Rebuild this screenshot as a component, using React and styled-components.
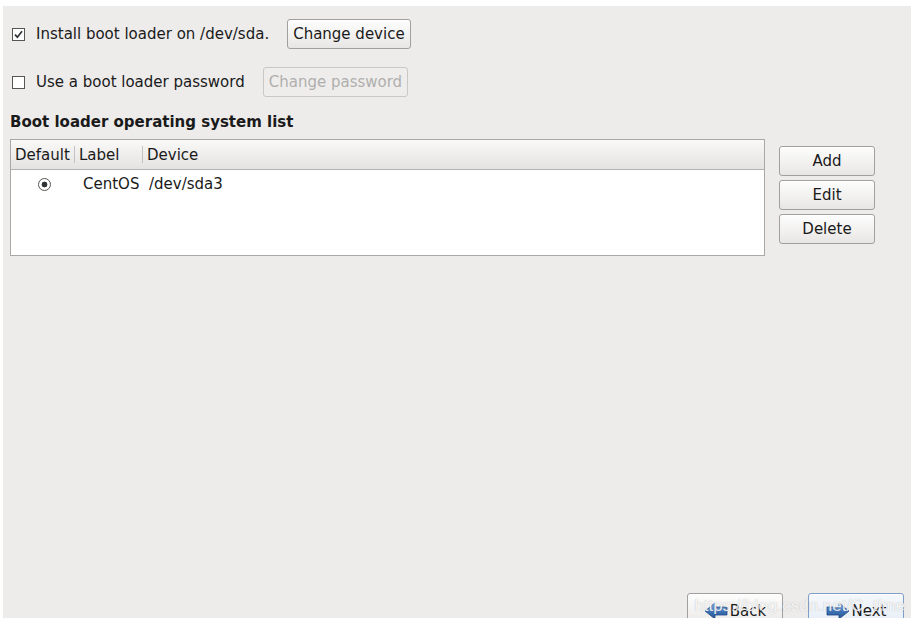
import React from 'react'
import styled, { createGlobalStyle, css } from 'styled-components'

const GlobalStyle = createGlobalStyle`
  html, body {
    margin: 0;
    padding: 0;
    background: #ffffff;
    overflow: hidden;
  }
  body {
    font-family: "DejaVu Sans", "Liberation Sans", sans-serif;
    font-size: 15px;
    color: #1a1a1a;
  }
`

const entries = [{ label: 'CentOS', device: '/dev/sda3', isDefault: true }]

function CheckMark() {
  return (
    <svg width="9" height="9" viewBox="0 0 9 9">
      <path d="M1 4.6 L3.4 7.2 L8 1.2" fill="none" stroke="#2e3436" strokeWidth="1.7" />
    </svg>
  )
}

function ArrowIcon({ dir }) {
  const d =
    dir === 'left'
      ? 'M1 10 L11 2 L11 6 L23 6 L23 14 L11 14 L11 18 Z'
      : 'M23 10 L13 2 L13 6 L1 6 L1 14 L13 14 L13 18 Z'
  return (
    <svg width="24" height="20" viewBox="0 0 24 20">
      <defs>
        <linearGradient id={`ag-${dir}`} x1="0" y1="0" x2="0" y2="1">
          <stop offset="0" stopColor="#8fb3e0" />
          <stop offset="0.5" stopColor="#3f74b8" />
          <stop offset="1" stopColor="#2a5490" />
        </linearGradient>
      </defs>
      <path d={d} fill={`url(#ag-${dir})`} stroke="#204a87" strokeWidth="0.8" />
    </svg>
  )
}

export default function App() {
  return (
    <>
      <GlobalStyle />
      <Panel>
        <OptionRow>
          <CheckBox>
            <CheckMark />
          </CheckBox>
          <OptionLabel>Install boot loader on /dev/sda.</OptionLabel>
          <Button>Change device</Button>
        </OptionRow>
        <OptionRow $second>
          <CheckBox />
          <OptionLabel>Use a boot loader password</OptionLabel>
          <Button disabled>Change password</Button>
        </OptionRow>

        <SectionTitle>Boot loader operating system list</SectionTitle>

        <ListArea>
          <Table>
            <HeaderRow>
              <HeadCell $w={64}>Default</HeadCell>
              <HeadCell $w={68}>Label</HeadCell>
              <HeadCell $last>Device</HeadCell>
            </HeaderRow>
            {entries.map((e) => (
              <BodyRow key={e.label}>
                <RadioCell>
                  <Radio $on={e.isDefault} />
                </RadioCell>
                <LabelCell>{e.label}</LabelCell>
                <DeviceCell>{e.device}</DeviceCell>
              </BodyRow>
            ))}
          </Table>
          <SideButtons>
            <SideButton>Add</SideButton>
            <SideButton>Edit</SideButton>
            <SideButton>Delete</SideButton>
          </SideButtons>
        </ListArea>

        <Footer>
          <NavButton>
            <ArrowIcon dir="left" />
            Back
          </NavButton>
          <NavButton $primary>
            <ArrowIcon dir="right" />
            Next
          </NavButton>
          <Watermark>https://blog.csdn.net/C_time</Watermark>
        </Footer>
      </Panel>
    </>
  )
}

const Panel = styled.div`
  position: relative;
  margin: 6px 0 0 3px;
  height: 612px;
  background: #edeceb;
  padding: 13px 0 0 7px;
  box-sizing: border-box;
  display: flex;
  flex-direction: column;
  overflow: hidden;
`

const OptionRow = styled.div`
  display: flex;
  align-items: center;
  height: 30px;
  padding-left: 2px;
  margin-top: ${(p) => (p.$second ? '18px' : '0')};
`

const CheckBox = styled.span`
  width: 11px;
  height: 11px;
  border: 1px solid #555753;
  background: #ffffff;
  display: flex;
  align-items: center;
  justify-content: center;
  margin-right: 11px;
`

const OptionLabel = styled.span`
  margin-right: 18px;
  white-space: nowrap;
`

const buttonBase = css`
  font-family: inherit;
  font-size: 15px;
  box-sizing: border-box;
  height: 30px;
  border-radius: 3px;
  border: 1px solid #a1a09e;
  background: linear-gradient(#fdfdfd, #f1f0ef 60%, #e7e6e4);
  color: #1a1a1a;
  padding: 0 5px;
  box-shadow: inset 0 1px 0 #ffffff;
`

const Button = styled.button`
  ${buttonBase}
  &:disabled {
    color: #b0afad;
    border-color: #c9c8c6;
    background: #eeedec;
    box-shadow: none;
  }
`

const SectionTitle = styled.div`
  font-weight: bold;
  margin-top: 16px;
  line-height: 18px;
`

const ListArea = styled.div`
  display: flex;
  align-items: flex-start;
  margin-top: 8px;
`

const Table = styled.div`
  width: 755px;
  height: 117px;
  box-sizing: border-box;
  border: 1px solid #a9a8a6;
  background: #ffffff;
`

const HeaderRow = styled.div`
  display: flex;
  height: 29px;
  border-bottom: 1px solid #b4b3b1;
  background: linear-gradient(#f9f9f8, #efeeed 50%, #e4e3e1);
`

const HeadCell = styled.div`
  display: flex;
  align-items: center;
  padding-left: 4px;
  width: ${(p) => (p.$w ? `${p.$w}px` : 'auto')};
  flex: ${(p) => (p.$last ? '1' : 'none')};
  box-sizing: border-box;
  position: relative;
  ${(p) =>
    !p.$last &&
    css`
      &::after {
        content: '';
        position: absolute;
        right: 0;
        top: 6px;
        bottom: 6px;
        border-right: 1px solid #c4c3c1;
      }
    `}
`

const BodyRow = styled.div`
  display: flex;
  align-items: center;
  height: 28px;
`

const RadioCell = styled.div`
  width: 64px;
  display: flex;
  justify-content: center;
  padding-left: 2px;
  box-sizing: border-box;
`

const Radio = styled.span`
  width: 11px;
  height: 11px;
  border-radius: 50%;
  border: 1px solid #555753;
  background: ${(p) =>
    p.$on ? 'radial-gradient(circle, #2e3436 0 2.6px, #ffffff 3.2px)' : '#ffffff'};
`

const LabelCell = styled.div`
  width: 68px;
  padding-left: 8px;
  box-sizing: border-box;
`

const DeviceCell = styled.div`
  padding-left: 6px;
`

const SideButtons = styled.div`
  display: flex;
  flex-direction: column;
  gap: 4px;
  margin: 7px 0 0 14px;
`

const SideButton = styled.button`
  ${buttonBase}
  width: 96px;
`

const Footer = styled.div`
  position: relative;
  margin-top: auto;
  height: 25px;
  display: flex;
  justify-content: flex-end;
  align-items: flex-start;
  gap: 25px;
  padding-right: 7px;
`

const NavButton = styled.button`
  ${buttonBase}
  width: 96px;
  height: 36px;
  display: flex;
  align-items: center;
  justify-content: center;
  gap: 2px;
  padding: 0;
  ${(p) =>
    p.$primary &&
    css`
      border-color: #7f9fcb;
      background: linear-gradient(#f5f8fc, #e6edf6);
    `}
`

const Watermark = styled.span`
  position: absolute;
  right: 6px;
  top: 3px;
  font-family: "Liberation Sans", sans-serif;
  font-size: 17px;
  color: rgba(255, 255, 255, 0.85);
  text-shadow: 0 0 1px rgba(120, 120, 120, 0.5);
  pointer-events: none;
  white-space: nowrap;
`
